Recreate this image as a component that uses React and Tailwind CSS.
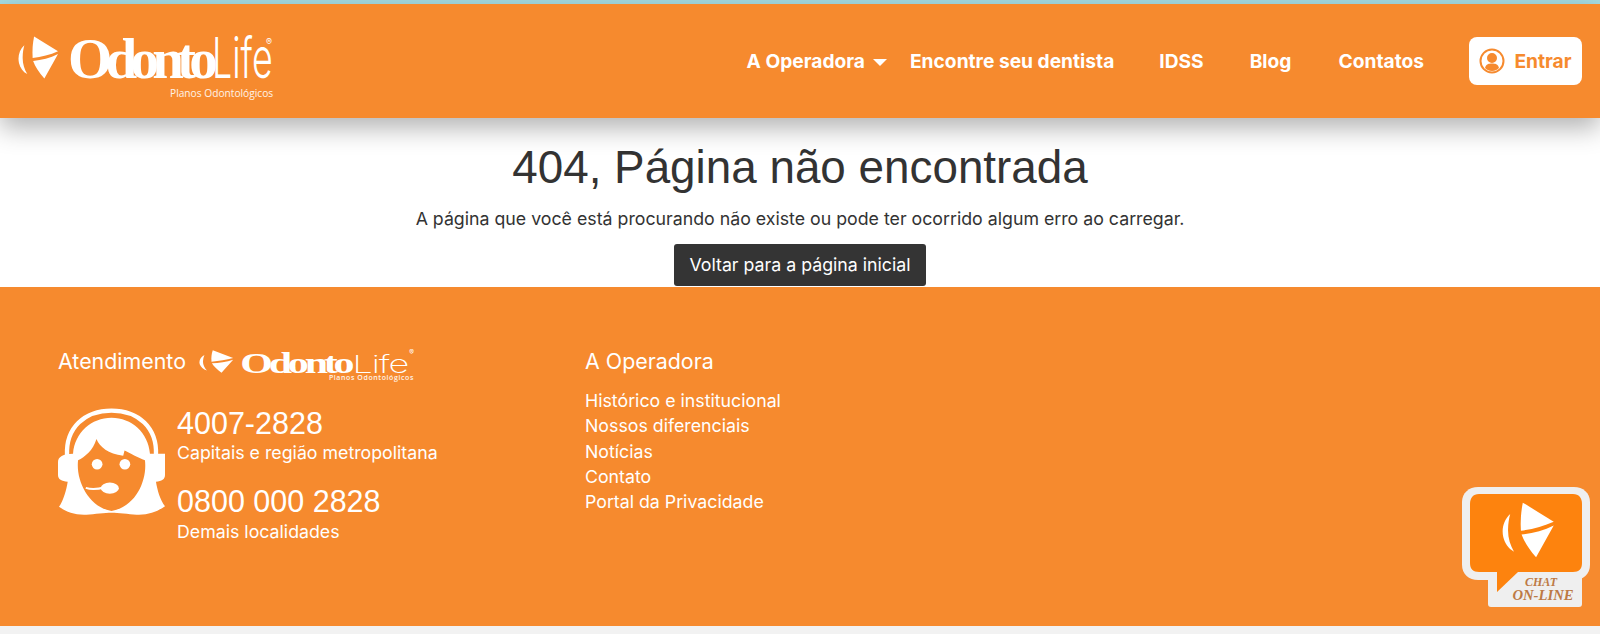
// the mark of the logo: crescent + two sails
const LogoMark = ({ className, fill = "#ffffff" }) => (
  <svg viewBox="0 0 42 44" preserveAspectRatio="none" className={className} fill={fill}>
    <path d="M6.5 9.5C1.5 14 -0.5 21 1 27.5C2.2 32.5 5 36.5 9.5 39C6.5 34 4.6 28 4.8 21.5C4.9 17 5.5 13 6.5 9.5Z" />
    <path d="M16.5 0.5L41 15.5C33 19 24 21.5 15 22.5C14.5 15 15 7.5 16.5 0.5Z" />
    <path d="M41 18.5L27 43.5C21.5 37.5 17.500 31 15.500 25.500C24 25 33 22.500 41 18.500Z" />
  </svg>
);

const HeaderLogo = () => (
  <div className="flex items-start">
    <LogoMark className="w-[41px] h-[43px] mt-[1px] shrink-0" />
    <div className="ml-[9px] flex flex-col w-[206px]">
      <div className="flex items-baseline h-[44px] leading-[44px] text-white whitespace-nowrap mt-[1px]">
        <span className="w-[144px] font-['Liberation_Serif',serif] font-bold text-[57px] tracking-[-6.8px]">Odonto</span>
        <span className="w-[56px] origin-left scale-x-[0.64] font-['Inter',sans-serif] font-light text-[56px]">Life</span>
        <span className="text-[9px] leading-none self-start mt-[1px] -ml-[2px]">®</span>
      </div>
      <span className="ml-[102px] font-['Open_Sans',sans-serif] text-[10.2px] leading-none mt-[8px] whitespace-nowrap text-white/90">Planos Odontológicos</span>
    </div>
  </div>
);

const FooterLogo = () => (
  <div className="flex items-start">
    <LogoMark className="w-[35px] h-[23px] mt-[1px] shrink-0" />
    <div className="ml-[7px] flex flex-col items-end w-[173px]">
      <div className="flex items-baseline h-[22px] leading-[22px] text-white whitespace-nowrap">
        <span className="font-['Liberation_Serif',serif] font-bold text-[42px] scale-y-[0.68] origin-bottom tracking-[-4.2px]">Odonto</span>
        <span className="font-['Inter',sans-serif] font-extralight text-[36px] scale-y-[0.68] origin-bottom tracking-[-1px] ml-[2px]">Life</span>
        <span className="text-[7px] leading-none self-start ml-[1px]">®</span>
      </div>
      <span className="font-['Open_Sans',sans-serif] font-semibold text-[7px] leading-none mt-[3px] tracking-[0.6px] text-white/90">Planos Odontológicos</span>
    </div>
  </div>
);

const Agent = () => (
  <svg viewBox="25 20 320 330" preserveAspectRatio="none" className="w-[107px] h-[108px] shrink-0">
    <path d="M52 165C48 80 105 28 185 28C265 28 322 80 318 165" fill="none" stroke="#fff" strokeWidth="13" />
    <path d="M70 160C75 95 125 50 185 50C245 50 295 95 300 160H345V225C345 238 335 245 318 245C322 270 330 300 345 320C325 335 295 348 260 346C235 344 205 340 185 340C165 340 135 344 110 346C75 348 45 335 28 322C42 300 50 270 54 245C36 245 25 238 25 225V185C25 170 40 160 70 160Z" fill="#fff" />
    <path d="M85 180C105 170 130 150 140 115C150 140 175 160 220 166L224 150C240 158 265 172 285 180C292 235 262 320 185 335C115 322 78 240 85 180Z" fill="#f68a2e" />
    <circle cx="142" cy="192" r="16" fill="#fff" />
    <circle cx="225" cy="192" r="16" fill="#fff" />
    <path d="M108 264C125 270 145 268 165 262" fill="none" stroke="#fff" strokeWidth="6" />
    <ellipse cx="180" cy="265" rx="27" ry="17" fill="#fff" />
  </svg>
);

const ChatBubble = () => (
  <div className="absolute right-[10px] bottom-[27px] w-[128px] h-[120px]">
    <svg viewBox="0 0 128 120" className="absolute inset-0 w-full h-full">
      <path d="M16 0H112C121 0 128 6 128 15V78C128 87 121 93 112 93H16C7 93 0 87 0 78V15C0 6 7 0 16 0Z" fill="#efefef" />
      <rect x="26" y="88" width="94" height="32" rx="3" fill="#efefef" />
      <path d="M17 7H111C117 7 120 11 120 17V76C120 82 117 85 111 85H56L35 105V85H17C11 85 8 82 8 76V17C8 11 11 7 17 7Z" fill="#fd830e" />
    </svg>
    <LogoMark className="absolute left-[40px] top-[15px] w-[53px] h-[56px]" />
    <div className="absolute left-[43px] top-[89px] w-[76px] text-center font-['Liberation_Serif',serif] italic font-bold text-[#bd7a45] leading-[13px]">
      <div className="text-[12px] pr-[4px]">CHAT</div>
      <div className="text-[14.7px] whitespace-nowrap">ON-LINE</div>
    </div>
  </div>
);

const NavLink = ({ children }) => (
  <a className="text-white font-bold text-[19.2px] whitespace-nowrap">{children}</a>
);

export default function App() {
  const links = ["Histórico e institucional", "Nossos diferenciais", "Notícias", "Contato", "Portal da Privacidade"];

  return (
    <div className="relative h-[634px] overflow-hidden bg-[#f2f2f2] font-['Inter',sans-serif]">
      <div className="h-[4px] bg-[#a5dbe2]" />

      <header className="relative z-10 h-[114px] bg-[#f68a2e] shadow-[0_10px_24px_rgba(0,0,0,0.3)] flex items-center justify-between px-[18px]">
        <div className="mt-[12px]">
          <HeaderLogo />
        </div>
        <nav className="flex items-center">
          <div className="flex items-center gap-[8px] mr-[23px]">
            <NavLink>A Operadora</NavLink>
            <span className="w-0 h-0 mt-[3px] border-x-[7px] border-x-transparent border-t-[7px] border-t-white" />
          </div>
          <div className="mr-[45px]"><NavLink>Encontre seu dentista</NavLink></div>
          <div className="mr-[46px]"><NavLink>IDSS</NavLink></div>
          <div className="mr-[47px]"><NavLink>Blog</NavLink></div>
          <div className="mr-[45px]"><NavLink>Contatos</NavLink></div>
          <button className="h-[48px] w-[113px] rounded-[8px] bg-white flex items-center justify-center gap-[9px] text-[#f68a2e] font-bold text-[19.2px]">
            <svg viewBox="0 0 26 26" className="w-[26px] h-[26px]" fill="none" stroke="#f68a2e" strokeWidth="2">
              <circle cx="13" cy="13" r="11.500" />
              <circle cx="13" cy="10" r="4" fill="#f68a2e" />
              <path d="M6 20C7 16 10 15.500 13 15.500C16 15.500 19 16 20 20C18 22 16 23 13 23C10 23 8 22 6 20Z" fill="#f68a2e" stroke="none" />
            </svg>
            Entrar
          </button>
        </nav>
      </header>

      <main className="h-[169px] bg-white flex flex-col items-center text-[#333333]">
        <h1 className="mt-[21px] font-['Liberation_Sans',sans-serif] text-[45.8px] leading-[58px] whitespace-nowrap">404, Página não encontrada</h1>
        <p className="mt-[10px] text-[17.76px] leading-[24px] whitespace-nowrap">A página que você está procurando não existe ou pode ter ocorrido algum erro ao carregar.</p>
        <button className="mt-[13px] w-[252px] h-[42px] rounded-[3px] bg-[#343434] text-white text-[17.76px]">Voltar para a página inicial</button>
      </main>

      <footer className="h-[339px] bg-[#f68a2e] text-white flex pt-[61px] pl-[58px]">
        <div className="w-[527px]">
          <div className="flex items-start">
            <span className="text-[21.4px] leading-[27px] whitespace-nowrap">Atendimento</span>
            <div className="ml-[13px] mt-[1px]">
              <FooterLogo />
            </div>
          </div>
          <div className="flex mt-[27px]">
            <Agent />
            <div className="ml-[12px] -mt-[1px] flex flex-col">
              <span className="font-['Liberation_Sans',sans-serif] text-[30.5px] leading-[32px]">4007-2828</span>
              <span className="text-[17.76px] leading-[24px] mt-[2px] whitespace-nowrap">Capitais e região metropolitana</span>
              <span className="font-['Liberation_Sans',sans-serif] text-[30.5px] leading-[36px] mt-[18px]">0800 000 2828</span>
              <span className="text-[17.76px] leading-[24px] mt-[1px]">Demais localidades</span>
            </div>
          </div>
        </div>
        <div>
          <h3 className="text-[21.4px] leading-[27px]">A Operadora</h3>
          <ul className="mt-[13px]">
            {links.map((l) => (
              <li key={l} className="text-[17.76px] leading-[25.3px]">{l}</li>
            ))}
          </ul>
        </div>
      </footer>

      <ChatBubble />
    </div>
  );
}
